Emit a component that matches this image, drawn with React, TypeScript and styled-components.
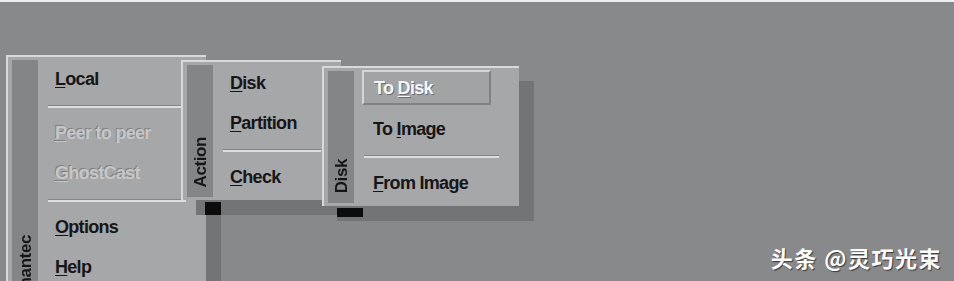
import * as React from 'react';
import styled, { createGlobalStyle } from 'styled-components';

const GlobalStyle = createGlobalStyle`
  html, body {
    margin: 0;
    padding: 0;
    width: 954px;
    height: 281px;
    overflow: hidden;
    background: #88898b;
  }
`;

const Desktop = styled.div`
  position: relative;
  width: 954px;
  height: 281px;
  box-sizing: border-box;
  border-top: 2px solid #eeeeee;
  background: #88898b;
  overflow: hidden;
  font-family: 'Liberation Sans', Arial, sans-serif;
`;

const Menu = styled.div<{ $x: number; $y: number; $w: number; $h: number }>`
  position: absolute;
  left: ${(p) => p.$x}px;
  top: ${(p) => p.$y}px;
  width: ${(p) => p.$w}px;
  height: ${(p) => p.$h}px;
  box-sizing: border-box;
  display: flex;
  padding: 2px 0 3px 4px;
  background: #a6a7a9;
  border-top: 2px solid #d8d9db;
  border-left: 2px solid #d8d9db;
  box-shadow: 15px 15px 0 #737476;
`;

const Sidebar = styled.div`
  flex: 0 0 26px;
  margin-top: 1px;
  background: #848587;
  display: flex;
  flex-direction: column;
  justify-content: flex-end;
  align-items: center;
  padding-bottom: 10px;
  box-sizing: border-box;
`;

const SideLabel = styled.span`
  writing-mode: vertical-rl;
  transform: rotate(180deg);
  font-size: 17px;
  font-weight: bold;
  letter-spacing: -0.4px;
  color: #151515;
  line-height: 1;
`;

const Items = styled.div<{ $indent: number }>`
  flex: 1;
  display: flex;
  flex-direction: column;
  --indent: ${(p) => p.$indent}px;
`;

const Item = styled.div<{ $disabled?: boolean }>`
  height: 40px;
  display: flex;
  align-items: center;
  padding-left: var(--indent);
  font-size: 18px;
  font-weight: bold;
  letter-spacing: -0.7px;
  white-space: nowrap;
  color: ${(p) => (p.$disabled ? '#c6c7c9' : '#161616')};
  text-shadow: ${(p) => (p.$disabled ? '-1px -1px 0 #808183' : 'none')};
`;

const ActiveRow = styled.div`
  height: 40px;
  display: flex;
  align-items: flex-start;
`;

const Highlight = styled.div`
  flex: 1;
  height: 35px;
  margin: 0 28px 0 8px;
  box-sizing: border-box;
  display: flex;
  align-items: center;
  padding: 2px 0 0 10px;
  background: #a2a3a5;
  border-top: 2px solid #d4d5d7;
  border-left: 2px solid #d4d5d7;
  border-right: 2px solid #808183;
  border-bottom: 2px solid #808183;
  font-size: 18px;
  font-weight: bold;
  letter-spacing: -0.7px;
  color: #f6f6f6;
  text-shadow: 1px 1px 0 #6d6e70;
`;

const Key = styled.span`
  text-decoration: underline;
  text-underline-offset: 2px;
`;

const Separator = styled.div`
  height: 14px;
  margin: 0 20px 0 10px;
  display: flex;
  flex-direction: column;
  justify-content: center;
  &::before {
    content: '';
    height: 1px;
    background: #848587;
  }
  &::after {
    content: '';
    height: 2px;
    background: #dcdde0;
  }
`;

const Notch = styled.div<{ $x: number; $y: number; $w: number; $h: number }>`
  position: absolute;
  left: ${(p) => p.$x}px;
  top: ${(p) => p.$y}px;
  width: ${(p) => p.$w}px;
  height: ${(p) => p.$h}px;
  background: #0c0c0c;
`;

const Watermark = styled.div`
  position: absolute;
  right: 12px;
  bottom: 8px;
  font-family: 'Noto Sans CJK SC', 'Noto Sans', sans-serif;
  font-size: 22px;
  font-weight: bold;
  color: #ffffff;
  text-shadow: 1px 1px 1px #3a3a3a;
  letter-spacing: 1.5px;
`;

const App: React.FC = () => {
  return (
    <>
      <GlobalStyle />
      <Desktop>
        <Menu $x={6} $y={53} $w={200} $h={270}>
          <Sidebar>
            <SideLabel>Symantec</SideLabel>
          </Sidebar>
          <Items $indent={17}>
            <Item>
              <Key>L</Key>ocal
            </Item>
            <Separator />
            <Item $disabled>
              <Key>P</Key>eer to peer
            </Item>
            <Item $disabled>
              <Key>G</Key>hostCast
            </Item>
            <Separator />
            <Item>
              <Key>O</Key>ptions
            </Item>
            <Item>
              <Key>H</Key>elp
            </Item>
          </Items>
        </Menu>

        <Menu $x={181} $y={58} $w={160} $h={140}>
          <Sidebar>
            <SideLabel>Action</SideLabel>
          </Sidebar>
          <Items $indent={17}>
            <Item>
              <Key>D</Key>isk
            </Item>
            <Item>
              <Key>P</Key>artition
            </Item>
            <Separator />
            <Item>
              <Key>C</Key>heck
            </Item>
          </Items>
          <Notch $x={22} $y={140} $w={16} $h={13} />
        </Menu>

        <Menu $x={322} $y={64} $w={197} $h={140}>
          <Sidebar>
            <SideLabel>Disk</SideLabel>
          </Sidebar>
          <Items $indent={19}>
            <ActiveRow>
              <Highlight>
                To&nbsp;<Key>D</Key>isk
              </Highlight>
            </ActiveRow>
            <Item>
              To&nbsp;<Key>I</Key>mage
            </Item>
            <Separator />
            <Item>
              <Key>F</Key>rom Image
            </Item>
          </Items>
          <Notch $x={13} $y={140} $w={26} $h={9} />
        </Menu>

        <Watermark>头条 @灵巧光束</Watermark>
      </Desktop>
    </>
  );
};

export default App;
